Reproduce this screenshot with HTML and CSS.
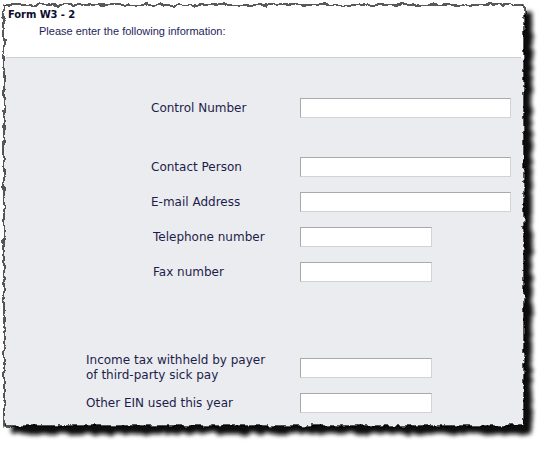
FILE: index.html
```html
<!DOCTYPE html>
<html>
<head>
<meta charset="utf-8">
<title>Form W3 - 2</title>
<link rel="stylesheet" href="styles.css">
</head>
<body>
<div class="page">
  <svg class="frame" width="545" height="449" viewBox="0 0 545 449" aria-hidden="true">
    <defs>
      <filter id="torn" x="-3%" y="-3%" width="106%" height="106%">
        <feTurbulence type="fractalNoise" baseFrequency="0.13" numOctaves="3" seed="7" result="noise"/>
        <feDisplacementMap in="SourceGraphic" in2="noise" scale="6" xChannelSelector="R" yChannelSelector="G"/>
      </filter>
      <filter id="shade" x="-5%" y="-5%" width="110%" height="110%">
        <feTurbulence type="fractalNoise" baseFrequency="0.13" numOctaves="3" seed="7" result="noise"/>
        <feDisplacementMap in="SourceGraphic" in2="noise" scale="6" xChannelSelector="R" yChannelSelector="G" result="d"/>
        <feGaussianBlur in="d" stdDeviation="2.2"/>
      </filter>
      <clipPath id="headclip"><rect x="0" y="0" width="545" height="58"/></clipPath>
    </defs>
    <rect x="11" y="12" width="521" height="422" fill="#111111" filter="url(#shade)"/>
    <rect x="4" y="5" width="520" height="421" fill="#ebecef" filter="url(#torn)"/>
    <g clip-path="url(#headclip)">
      <rect x="4" y="5" width="520" height="421" fill="#ffffff" filter="url(#torn)"/>
    </g>
    <rect x="4" y="5" width="520" height="421" fill="none" stroke="#000" stroke-width="1.3" filter="url(#torn)"/>
  </svg>

  <div class="sheet">
    <div class="header">
      <div class="title">Form W3 - 2</div>
      <div class="subtitle">Please enter the following information:</div>
    </div>
    <div class="body">
      <div class="row r-control">
        <label class="lbl in-a">Control Number</label>
        <input class="field wide" type="text">
      </div>
      <div class="row r-contact">
        <label class="lbl in-a">Contact Person</label>
        <input class="field wide" type="text">
      </div>
      <div class="row r-small">
        <label class="lbl in-a">E-mail Address</label>
        <input class="field wide" type="text">
      </div>
      <div class="row r-small">
        <label class="lbl in-b">Telephone number</label>
        <input class="field short" type="text">
      </div>
      <div class="row r-small">
        <label class="lbl in-b">Fax number</label>
        <input class="field short" type="text">
      </div>
      <div class="row r-income">
        <label class="lbl in-c">Income tax withheld by payer<br>of third-party sick pay</label>
        <input class="field short shifted" type="text">
      </div>
      <div class="row r-other">
        <label class="lbl in-c">Other EIN used this year</label>
        <input class="field short" type="text">
      </div>
    </div>
  </div>
</div>
</body>
</html>
```

FILE: styles.css
```css
html, body {
  margin: 0;
  padding: 0;
  background: #ffffff;
}

.page {
  position: relative;
  width: 545px;
  height: 449px;
  overflow: hidden;
}

.frame {
  position: absolute;
  left: 0;
  top: 0;
  z-index: 0;
}

.sheet {
  position: relative;
  z-index: 1;
  margin-left: 4px;
  padding-top: 5px;
  width: 520px;
}

.header {
  height: 52px;
  border-bottom: 1px solid #cfcfd2;
  margin: 0 3px 0 2px;
}

.title {
  font-family: "DejaVu Sans", sans-serif;
  font-weight: bold;
  font-size: 10px;
  line-height: 12px;
  color: #0c0c30;
  padding: 4px 0 0 2px;
  letter-spacing: -0.1px;
}

.subtitle {
  font-family: "Liberation Sans", Arial, sans-serif;
  font-size: 11px;
  line-height: 13px;
  color: #1e1e5a;
  padding: 4px 0 0 33px;
}

.body {
  display: flex;
  flex-direction: column;
}

.row {
  display: grid;
  grid-template-columns: 296px auto;
  align-items: center;
  min-height: 20px;
}

.r-control { margin-top: 40px; }
.r-contact { margin-top: 39px; }
.r-small { margin-top: 15px; }
.r-income { margin-top: 71px; align-items: start; }
.r-other { margin-top: 10px; }

.lbl {
  font-family: "DejaVu Sans", Verdana, sans-serif;
  font-size: 12px;
  line-height: 15px;
  color: #1d1d4c;
}

.in-a { padding-left: 147px; }
.in-b { padding-left: 149px; }
.in-c { padding-left: 82px; }

.field {
  box-sizing: border-box;
  height: 20px;
  margin: 0;
  padding: 0 3px;
  background: #ffffff;
  border: 1px solid;
  border-color: #a9a9ab #d3d3d6 #d3d3d6 #a9a9ab;
  outline: none;
  font-family: "DejaVu Sans", sans-serif;
  font-size: 12px;
}

.shifted { margin-top: 5px; }

.wide { width: 211px; }
.short { width: 132px; }
```
